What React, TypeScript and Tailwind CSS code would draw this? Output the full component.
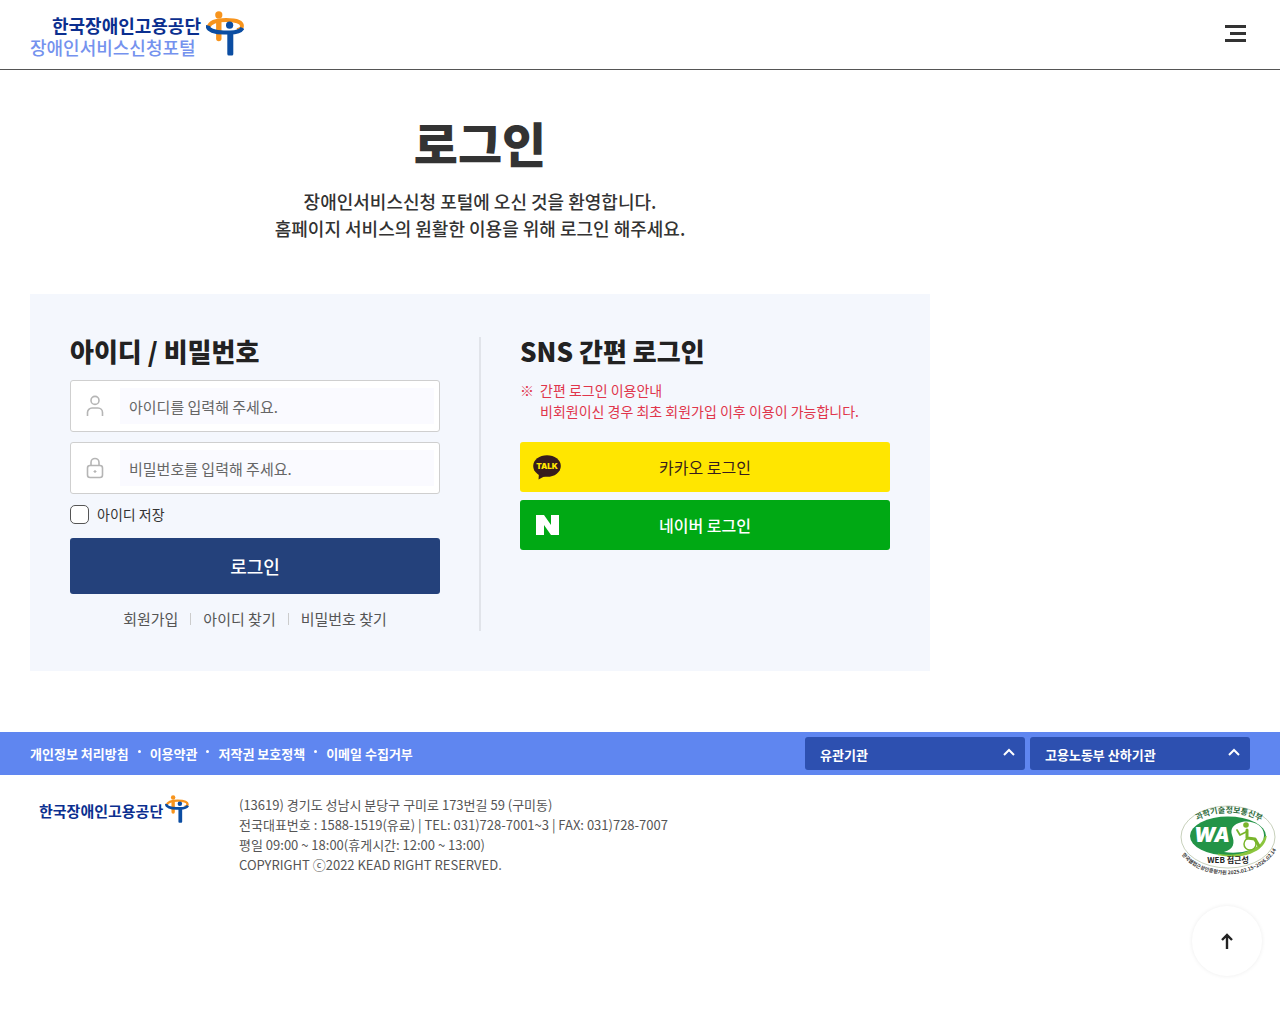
import React, { useState } from 'react';

const HeadLogoMark = ({ className }: { className: string }) => (
  <svg viewBox="0 0 38 45" className={className} aria-hidden="true">
    <path d="M2.500 16C4 11 12 9 20 9C29 9 36 11 36 15C36 17 34 18.500 31 19" fill="none" stroke="#f7941d" strokeWidth="3.800" />
    <path d="M12.800 11V27.500" stroke="#f7941d" strokeWidth="5.400" strokeLinecap="round" />
    <circle cx="12.800" cy="3.900" r="3.600" fill="#f7941d" />
    <path d="M2 14.500C1 19 9 21.500 18 21.500H24C30 21.500 35 20 36.500 17" fill="none" stroke="#0b4da2" strokeWidth="4.200" />
    <path d="M21.300 21H27.300V43Q27.300 44.500 25.800 44.500H22.800Q21.300 44.500 21.300 43Z" fill="#0b4da2" />
    <circle cx="23.600" cy="14.200" r="3.600" fill="#0b4da2" />
  </svg>
);

const UserIcon = () => (
  <svg viewBox="0 0 18 22" className="h-[22px] w-[18px]" fill="none" stroke="#b5b5b5" strokeWidth="1.6" aria-hidden="true">
    <circle cx="9" cy="5.4" r="4" />
    <path d="M1.5 21V17.5A4.5 4.5 0 0 1 6 13H12A4.5 4.5 0 0 1 16.500 17.500V21" />
  </svg>
);

const LockIcon = () => (
  <svg viewBox="0 0 18 22" className="h-[22px] w-[18px]" fill="none" stroke="#b5b5b5" strokeWidth="1.6" aria-hidden="true">
    <rect x="1.500" y="8.500" width="15" height="12" rx="2.500" />
    <path d="M5 8.500V5.500A4 4 0 0 1 13 5.500V8.500" />
    <path d="M9 13V16M7.500 14.500H10.500" strokeWidth="1.200" />
  </svg>
);

const TalkIcon = () => (
  <svg viewBox="0 0 28 25" className="h-[25px] w-7" aria-hidden="true">
    <ellipse cx="14" cy="11" rx="13.800" ry="10.800" fill="#371c1d" />
    <path d="M6 17L5.500 24.500L14 20Z" fill="#371c1d" />
    <text x="14" y="14" textAnchor="middle" fontSize="8" fontWeight="900" fontFamily="Inter, sans-serif" fill="#ffe600">TALK</text>
  </svg>
);

const NaverIcon = () => (
  <svg viewBox="0 0 23 20" className="h-5 w-[23px]" aria-hidden="true">
    <path d="M0 0H8L15 10V0H23V20H15L8 10V20H0Z" fill="#fff" />
  </svg>
);

const WebAccessMark = () => (
  <svg viewBox="0 0 100 72" className="h-[72px] w-[100px] overflow-visible" role="img" aria-label="WEB 접근성 품질인증 마크">
    <defs>
      <path id="wa-top" d="M12 18Q48 -3 86 19" />
      <path id="wa-bottom" d="M0 47C18 77 80 78 98 42" />
    </defs>
    <ellipse cx="48" cy="32" rx="47" ry="31" fill="#fff" stroke="#b9c4a9" strokeWidth="0.800" />
    <ellipse cx="48" cy="31" rx="38" ry="19.500" fill="#239447" />
    <path d="M86 31C84 47 62 54 38 49.500C60 53 78 46 86 31Z" fill="#8cc63f" stroke="#8cc63f" strokeWidth="1.500" />
    <path d="M84 30C84 20 72 15 62 17C53 19 50 24 52 30C55 38 54 44 44 47C66 50 84 42 84 30Z" fill="#fff" />
    <g fill="none" stroke="#79b52b" strokeWidth="3" strokeLinecap="round" strokeLinejoin="round">
      <circle cx="70" cy="39" r="6" strokeWidth="1.500" />
      <path d="M67 25L67 33L75 34L79 41" />
      <path d="M66 27L60 30L57 25" strokeWidth="1.800" />
    </g>
    <circle cx="66" cy="20" r="2.800" fill="#79b52b" />
    <text x="14" y="37" fontSize="20" fontWeight="900" fontStyle="italic" fontFamily="Inter, sans-serif" fill="#fff">WA</text>
    <text x="48" y="58" textAnchor="middle" fontSize="8" fontWeight="700" fontFamily="'Noto Sans CJK KR', sans-serif" fill="#222">WEB 접근성</text>
    <text fontSize="8" fontWeight="700" fontFamily="'Noto Sans CJK KR', sans-serif" fill="#2d6b3c">
      <textPath href="#wa-top" startOffset="50%" textAnchor="middle">과학기술정보통신부</textPath>
    </text>
    <text fontSize="5" fontWeight="700" fontFamily="'Noto Sans CJK KR', sans-serif" fill="#333">
      <textPath href="#wa-bottom" startOffset="50%" textAnchor="middle">한국웹접근성인증평가원 2025.02.15~2026.02.14</textPath>
    </text>
  </svg>
);

interface LoginFieldProps {
  id: string;
  type: string;
  placeholder: string;
  icon: React.ReactNode;
}

const LoginField = ({ id, type, placeholder, icon }: LoginFieldProps) => (
  <div className="flex h-[52px] items-center rounded-[3px] border border-[#cfcfcf] bg-white pr-[5px]">
    <label htmlFor={id} aria-label={placeholder} className="flex w-[49px] shrink-0 justify-center pr-[2px]">
      {icon}
    </label>
    <input
      id={id}
      type={type}
      placeholder={placeholder}
      className="h-9 min-w-0 flex-1 bg-[#fafaff] px-[9px] text-[15px] text-[#333] outline-none placeholder:text-[#666]"
    />
  </div>
);

const FamilySite = ({ name }: { name: string }) => (
  <div className="relative w-[220px]">
    <select
      aria-label={name}
      className="h-[33px] w-full appearance-none rounded-[3px] bg-[#2d50b0] pt-[2px] pl-[15px] text-[13px] font-bold text-white"
    >
      <option>{name}</option>
    </select>
    <svg viewBox="0 0 12 8" className="pointer-events-none absolute top-[11px] right-[10px] h-2 w-3" fill="none" stroke="#fff" strokeWidth="2" aria-hidden="true">
      <path d="M1 7L6 2L11 7" />
    </svg>
  </div>
);

const policies = ['개인정보 처리방침', '이용약관', '저작권 보호정책', '이메일 수집거부'];
const accountLinks = ['회원가입', '아이디 찾기', '비밀번호 찾기'];

const App = () => {
  const [saveId, setSaveId] = useState(false);

  return (
    <div className="min-h-screen bg-white font-['Noto_Sans_CJK_KR',sans-serif] text-[#333]">
      {/* Header */}
      <header className="flex h-[70px] items-center justify-between border-b border-[#555] px-[30px] pb-[2px]">
        <a href="#" className="flex items-center gap-[5px]">
          <span className="flex w-[171px] flex-col pt-1 text-lg leading-[22px]">
            <span className="self-end font-bold text-[#0b2f8f]">한국장애인고용공단</span>
            <span className="font-medium text-[#7592ee]">장애인서비스신청포털</span>
          </span>
          <HeadLogoMark className="h-[45px] w-[38px]" />
        </a>
        <button type="button" aria-label="전체메뉴" className="mr-1 flex w-[21px] flex-col items-end gap-1">
          <span className="h-[3px] w-full bg-[#333]"></span>
          <span className="h-[3px] w-4 bg-[#333]"></span>
          <span className="h-[3px] w-full bg-[#333]"></span>
        </button>
      </header>

      <main className="w-full max-w-[960px] px-[30px] pt-12 pb-[61px]">
        <div className="text-center">
          <h1 className="text-5xl leading-[48px] font-black">로그인</h1>
          <p className="mt-[22px] text-lg leading-[27px] font-medium">
            장애인서비스신청 포털에 오신 것을 환영합니다.
            <br />
            홈페이지 서비스의 원활한 이용을 위해 로그인 해주세요.
          </p>
        </div>

        {/* Login panel */}
        <div className="mt-[52px] flex bg-[#f4f7fd] px-10 pt-[43px] pb-10">
          <form className="flex-1" onSubmit={(e) => e.preventDefault()}>
            <h2 className="text-[26px] leading-7 font-black text-[#222]">아이디 / 비밀번호</h2>
            <div className="mt-[15px] flex flex-col gap-[10px]">
              <LoginField id="user-id" type="text" placeholder="아이디를 입력해 주세요." icon={<UserIcon />} />
              <LoginField id="user-pw" type="password" placeholder="비밀번호를 입력해 주세요." icon={<LockIcon />} />
            </div>
            <div className="mt-[10px] flex items-center gap-2">
              <input
                id="save-id"
                type="checkbox"
                checked={saveId}
                onChange={(e) => setSaveId(e.target.checked)}
                className="size-[19px] appearance-none rounded-[5px] border border-[#555] bg-white checked:bg-[#24417b]"
              />
              <label htmlFor="save-id" className="text-sm leading-5">아이디 저장</label>
            </div>
            <button type="submit" className="mt-[14px] h-14 w-full rounded-[3px] bg-[#24417b] text-lg font-medium text-white">
              로그인
            </button>
            <ul className="mt-[13px] flex items-center justify-center text-[15px] leading-6 text-[#555]">
              {accountLinks.map((name, i) => (
                <li key={name} className="flex items-center">
                  {i > 0 && <span className="mx-3 h-3 w-px bg-[#ccc]"></span>}
                  <a href="#">{name}</a>
                </li>
              ))}
            </ul>
          </form>

          <div className="mx-[39px] w-[2px] bg-[#e1e4ea]"></div>

          <section className="flex-1">
            <h2 className="text-[26px] leading-7 font-black text-[#222]">SNS 간편 로그인</h2>
            <div className="mt-[15px] flex gap-[6px] text-sm leading-[21px] text-[#e0354b]">
              <span>※</span>
              <p>
                간편 로그인 이용안내
                <br />
                비회원이신 경우 최초 회원가입 이후 이용이 가능합니다.
              </p>
            </div>
            <div className="mt-5 flex flex-col gap-2">
              <button type="button" className="grid h-[50px] grid-cols-[28px_1fr_28px] items-center rounded-[3px] bg-[#ffe600] px-[13px] text-base text-[#371c1d]">
                <TalkIcon />
                <span>카카오 로그인</span>
              </button>
              <button type="button" className="grid h-[50px] grid-cols-[28px_1fr_28px] items-center justify-items-center rounded-[3px] bg-[#00a914] px-[13px] text-base font-medium text-white">
                <NaverIcon />
                <span>네이버 로그인</span>
              </button>
            </div>
          </section>
        </div>
      </main>

      {/* Footer */}
      <footer>
        <div className="flex h-[43px] items-center justify-between bg-[#5f86f0] px-[30px]">
          <ul className="flex text-[13px] leading-5 font-bold text-white">
            {policies.map((name, i) => (
              <li key={name} className="flex">
                {i > 0 && <span className="mx-[9px] mt-[6px] size-[3px] rounded-full bg-white"></span>}
                <a href="#">{name}</a>
              </li>
            ))}
          </ul>
          <div className="flex gap-[5px]">
            <FamilySite name="유관기관" />
            <FamilySite name="고용노동부 산하기관" />
          </div>
        </div>
        <div className="flex items-start pt-5 pl-[39px]">
          <a href="#" className="flex w-[200px] shrink-0 items-start gap-[2px] text-[15px] leading-8 font-bold text-[#0b2f8f]">
            한국장애인고용공단
            <HeadLogoMark className="h-7 w-6" />
          </a>
          <address className="text-[13px] leading-5 text-[#555] not-italic">
            (13619) 경기도 성남시 분당구 구미로 173번길 59 (구미동)
            <br />
            전국대표번호 : 1588-1519(유료) | TEL: 031)728-7001~3 | FAX: 031)728-7007
            <br />
            평일 09:00 ~ 18:00(휴게시간: 12:00 ~ 13:00)
            <br />
            COPYRIGHT ⓒ2022 KEAD RIGHT RESERVED.
          </address>
          <div className="mt-[10px] ml-auto">
            <WebAccessMark />
          </div>
        </div>
      </footer>

      <button
        type="button"
        aria-label="맨 위로"
        className="fixed right-[18px] bottom-12 flex size-[70px] items-center justify-center rounded-full bg-white shadow-[0_0_4px_rgba(0,0,0,0.08)]"
      >
        <svg viewBox="0 0 12 16" className="h-4 w-3" fill="none" stroke="#222" strokeWidth="2.400" aria-hidden="true">
          <path d="M6 16V2M1 7L6 2L11 7" />
        </svg>
      </button>
    </div>
  );
};

export default App;
